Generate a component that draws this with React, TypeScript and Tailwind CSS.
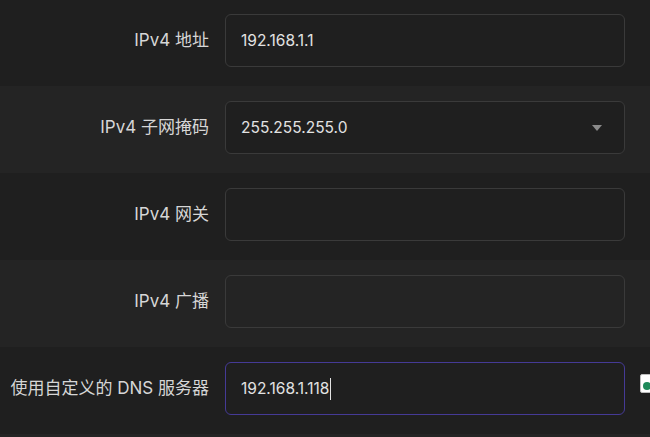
import React from "react";

const font = { fontFamily: 'Inter, "Noto Sans CJK SC", sans-serif' };

function Row({
  label,
  bg,
  children,
  extra,
}: {
  label: string;
  bg: string;
  children: React.ReactNode;
  extra?: React.ReactNode;
}) {
  return (
    <div className={`flex h-[87px] shrink-0 items-start pt-[15px] ${bg}`}>
      <div className="flex h-[53px] w-[209px] shrink-0 items-center justify-end whitespace-nowrap text-[17px] text-[#d6d6d6]">
        {label}
      </div>
      <div className="ml-[16px] w-[400px] shrink-0">{children}</div>
      {extra}
    </div>
  );
}

function Input({ value, focused, caret }: { value?: string; focused?: boolean; caret?: boolean }) {
  return (
    <div
      className={`flex h-[53px] items-center rounded-[6px] border px-[15px] text-[15.5px] text-[#e2e2e2] ${
        focused ? "border-[#453a96]" : "border-[#3a3a3a]"
      }`}
    >
      <span>{value}</span>
      {caret && <span className="ml-[1px] inline-block h-[22px] w-px bg-[#e2e2e2]" />}
    </div>
  );
}

export default function App() {
  return (
    <div className="mt-[-1px] flex h-[438px] w-[650px] flex-col overflow-hidden bg-[#1f1f1f]" style={font}>
      <Row label="IPv4 地址" bg="bg-[#1f1f1f]">
        <Input value="192.168.1.1" />
      </Row>
      <Row label="IPv4 子网掩码" bg="bg-[#242424]">
        <div className="flex h-[53px] items-center justify-between rounded-[6px] border border-[#3a3a3a] bg-[#1f1f1f] pl-[15px] pr-[22px] text-[15.5px] text-[#e2e2e2]">
          <span>255.255.255.0</span>
          <svg width="10" height="6" viewBox="0 0 10 6">
            <path d="M0 0 L10 0 L5 6 Z" fill="#8a8a8a" />
          </svg>
        </div>
      </Row>
      <Row label="IPv4 网关" bg="bg-[#1f1f1f]">
        <Input />
      </Row>
      <Row label="IPv4 广播" bg="bg-[#242424]">
        <Input />
      </Row>
      <Row
        label="使用自定义的 DNS 服务器"
        bg="bg-[#1f1f1f]"
        extra={
          <div className="ml-[15px] mt-[12px] flex h-[19px] w-[20px] shrink-0 items-end rounded-[2px] border border-[#bdbdbd] bg-white pb-[2px] pl-[2px]">
            <div className="h-[8px] w-[8px] rounded-full bg-[#1e8a5a]" />
          </div>
        }
      >
        <Input value="192.168.1.118" focused caret />
      </Row>
      <div className="h-[10px] shrink-0 bg-[#242424]" />
    </div>
  );
}
